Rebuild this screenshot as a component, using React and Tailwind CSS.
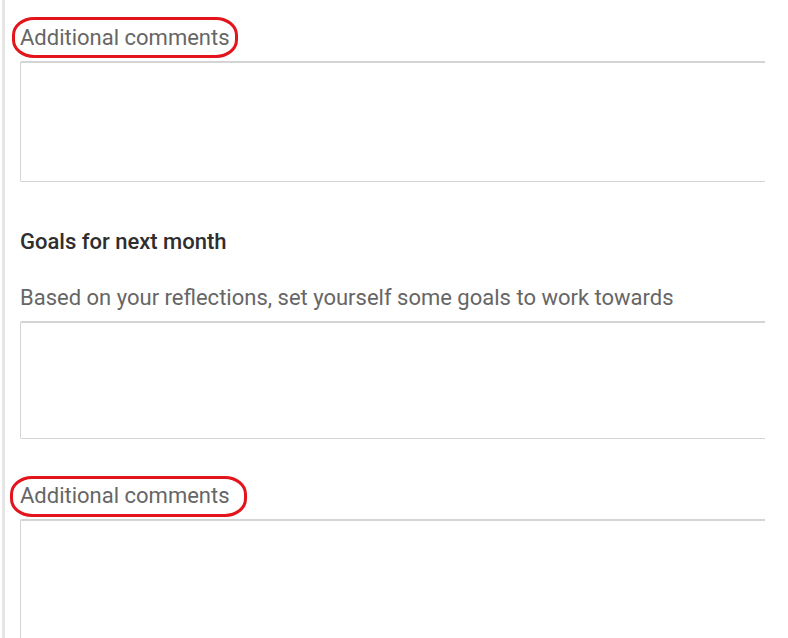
import React from "react";

export default function App() {
  return (
    <div
      className="w-[788px] h-[638px] overflow-hidden bg-white flex"
      style={{ fontFamily: "Roboto, 'Liberation Sans', sans-serif" }}
    >
      <div className="ml-[2px] w-[3px] shrink-0 bg-[#e6e6e6]" />
      <div className="pl-[15px] w-[760px] shrink-0 flex flex-col">
        <div className="relative shrink-0 mt-[25px] text-[22px] leading-[26px] text-[#666666]">
          Additional comments
          <div className="absolute left-[-8px] top-[-8px] w-[226px] h-[41px] border-[3px] border-[#e3141c] rounded-[22px/18px]" />
        </div>
        <div className="shrink-0 mt-[10px] h-[121px] border border-r-0 border-[#d4d4d4] border-t-2 rounded-l-[2px]" />
        <div className="shrink-0 mt-[47px] text-[22px] leading-[26px] font-medium text-[#2e2e2e]">
          Goals for next month
        </div>
        <div className="shrink-0 mt-[30px] text-[22px] leading-[26px] text-[#666666]">
          Based on your reflections, set yourself some goals to work towards
        </div>
        <div className="shrink-0 mt-[10px] h-[118px] border border-r-0 border-[#d4d4d4] border-t-2 rounded-l-[2px]" />
        <div className="relative shrink-0 mt-[44px] text-[22px] leading-[26px] text-[#666666]">
          Additional comments
          <div className="absolute left-[-10px] top-[-7px] w-[237px] h-[41px] border-[3px] border-[#e3141c] rounded-[22px/18px]" />
        </div>
        <div className="shrink-0 mt-[10px] h-[200px] border border-r-0 border-[#d4d4d4] border-t-2 rounded-l-[2px]" />
      </div>
    </div>
  );
}
